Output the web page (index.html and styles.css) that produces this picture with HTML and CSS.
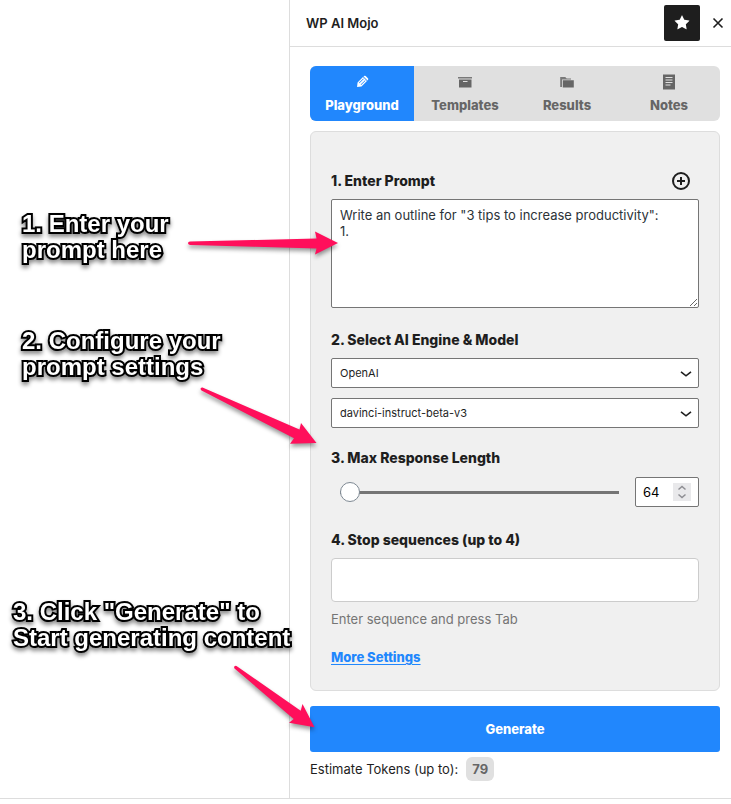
FILE: index.html
```html
<!DOCTYPE html>
<html lang="en">
<head>
<meta charset="utf-8">
<meta name="viewport" content="width=device-width, initial-scale=1">
<title>WP AI Mojo</title>
<link rel="stylesheet" href="styles.css">
</head>
<body>
<div class="editor">
  <main class="canvas"></main>
  <aside class="sidebar">
    <header class="sidebar-header">
      <h1 class="sidebar-title">WP AI Mojo</h1>
      <button class="icon-button pinned" type="button" aria-label="Unpin from toolbar">
        <svg width="24" height="24" viewBox="0 0 24 24" fill="currentColor"><path d="M11.776 4.454a.25.25 0 01.448 0l2.069 4.192a.25.25 0 00.188.137l4.626.672a.25.25 0 01.139.426l-3.348 3.263a.25.25 0 00-.072.222l.79 4.607a.25.25 0 01-.362.263l-4.138-2.175a.25.25 0 00-.232 0l-4.138 2.175a.25.25 0 01-.363-.263l.79-4.607a.25.25 0 00-.071-.222L4.754 9.881a.25.25 0 01.139-.426l4.626-.672a.25.25 0 00.188-.137l2.069-4.192z"/></svg>
      </button>
      <button class="icon-button close" type="button" aria-label="Close">
        <svg width="24" height="24" viewBox="0 0 24 24" fill="none" stroke="currentColor" stroke-width="1.6"><path d="M7.500 7.500l9 9M16.500 7.500l-9 9"/></svg>
      </button>
    </header>

    <div class="sidebar-body">
      <nav class="tabs">
        <button class="tab active" type="button">
          <svg width="20" height="20" viewBox="0 0 20 20"><g transform="rotate(45 10 10)" fill="currentColor"><path d="M7.200 5V4.400A1.200 1.200 0 018.400 3.200h3.200a1.200 1.200 0 011.200 1.200V5z"/><path fill-rule="evenodd" d="M7.200 5.800h5.600v7.700L10 17l-2.800-3.500zM8.400 6.600v6.200h.7V6.600zm2.500 0v6.200h.7V6.600z"/></g></svg>
          Playground
        </button>
        <button class="tab" type="button">
          <svg width="20" height="20" viewBox="0 0 20 20" fill="currentColor"><path d="M3 5h14v1.600H3z" opacity=".85"/><path fill-rule="evenodd" d="M4 7.400h12.500V15.500H4zM8 9v1h4.500V9z"/></svg>
          Templates
        </button>
        <button class="tab" type="button">
          <svg width="20" height="20" viewBox="0 0 20 20" fill="currentColor"><path d="M3.200 15V5h5l1.500 1.500H14v1H5v7.500z" opacity=".85"/><path d="M5.800 8.200h11v7.300h-11z"/></svg>
          Results
        </button>
        <button class="tab" type="button">
          <svg width="20" height="20" viewBox="0 0 20 20"><path fill="currentColor" d="M4 2.500h12v15H4z"/><path d="M6.500 5.500h7M6.500 8h7M6.500 10.500h7M6.500 13h5" stroke="#e0e0e0"/></svg>
          Notes
        </button>
      </nav>

      <form class="panel">
        <section class="field">
          <div class="field-head">
            <label class="field-title" for="prompt">1. Enter Prompt</label>
            <button class="add" type="button" aria-label="Add prompt">
              <svg width="20" height="20" viewBox="0 0 20 20" fill="none" stroke="currentColor" stroke-width="2"><circle cx="10" cy="10" r="8"/><path d="M10 6v8M6 10h8"/></svg>
            </button>
          </div>
          <textarea class="box prompt" id="prompt">Write an outline for "3 tips to increase productivity":
1.</textarea>
        </section>

        <section class="field">
          <label class="field-title" for="engine">2. Select AI Engine &amp; Model</label>
          <div class="select-wrap">
            <select class="box" id="engine"><option>OpenAI</option></select>
            <svg class="chevron" width="12" height="6" viewBox="0 0 12 6"><path d="M1 .8l5 4L11 .8"/></svg>
          </div>
          <div class="select-wrap">
            <select class="box" aria-label="Model"><option>davinci-instruct-beta-v3</option></select>
            <svg class="chevron" width="12" height="6" viewBox="0 0 12 6"><path d="M1 .8l5 4L11 .8"/></svg>
          </div>
        </section>

        <section class="field length">
          <label class="field-title" for="length">3. Max Response Length</label>
          <div class="slider-row">
            <input class="slider" id="length" type="range" min="64" max="2048" value="64">
            <div class="number-wrap">
              <input class="box number" type="number" value="64" aria-label="Max response length">
              <svg class="spinner" width="18" height="18" viewBox="0 0 18 18"><path class="spinner-bg" d="M0 0h18v18H0z"/><path d="M5.500 6.500L9 3.500l3.500 3M5.500 11.500l3.500 3 3.500-3"/></svg>
            </div>
          </div>
        </section>

        <section class="field">
          <label class="field-title" for="stop">4. Stop sequences (up to 4)</label>
          <input class="box stop" id="stop" type="text">
          <p class="hint">Enter sequence and press Tab</p>
        </section>

        <a class="more" href="#more">More Settings</a>
      </form>

      <button class="generate" type="button">Generate</button>
      <p class="estimate">Estimate Tokens (up to): <span class="badge">79</span></p>
    </div>
  </aside>
</div>

<svg class="arrows" width="350" height="740" viewBox="0 0 350 740">
  <path d="M190 241.500L316.500 238.500L315 231.500L338 243L315 254.500L316.500 248.500L190 245Q188 244.500 188 243.200Q188 241.700 190 241.500Z"/>
  <path d="M202.500 387.500L299.500 429.500L301 423L316.500 443L290 443.700L294 438.300L201.500 390.500Q200.300 389.500 200.700 388.300Q201.300 387.300 202.500 387.500Z"/>
  <path d="M236.500 666L300.700 710.700L302.500 704L314.500 727.300L289 722.700L293.700 719L234.500 668.500Q233.700 667.300 234.500 666.300Q235.500 665.500 236.500 666Z"/>
</svg>
<p class="callout callout-prompt">1. Enter your<br>prompt here</p>
<p class="callout callout-settings">2. Configure your<br>prompt settings</p>
<p class="callout callout-generate">3. Click "Generate" to<br>Start generating content</p>
</body>
</html>
```
FILE: styles.css
```css
* {
  box-sizing: border-box;
}

body {
  position: relative;
  margin: 0;
  background: #fff;
  color: #1e1e1e;
  font: 13px/20px Inter, sans-serif;
}

button,
input,
select,
textarea {
  margin: 0;
  font: inherit;
  color: inherit;
}

button {
  border: 0;
  padding: 0;
  background: none;
  cursor: pointer;
}

h1,
p {
  margin: 0;
}

svg {
  display: block;
}

.editor {
  display: flex;
  min-height: calc(100vh - 5px);
  border-bottom: 1px solid #ddd;
}

.canvas {
  flex: 1;
}

.sidebar {
  flex: 0 0 442px;
  border-left: 1px solid #ddd;
}

.sidebar-header {
  display: flex;
  align-items: center;
  height: 47px;
  padding-left: 16px;
  border-bottom: 1px solid #ddd;
}

.sidebar-title {
  flex: 1;
  font-size: 13px;
  font-weight: 600;
}

.icon-button {
  display: grid;
  place-items: center;
  width: 31px;
  height: 36px;
}

.icon-button.close {
  padding-left: 4px;
}

.icon-button.pinned {
  width: 36px;
  border-radius: 2px;
  background: #1e1e1e;
  color: #fff;
}

.sidebar-body {
  padding: 19px 11px 14px 20px;
}

.tabs {
  display: flex;
  overflow: hidden;
  border-radius: 6px;
  background: #e0e0e0;
}

.tab {
  display: flex;
  flex: 1 1 auto;
  flex-direction: column;
  align-items: center;
  gap: 3px;
  width: 102px;
  height: 55px;
  padding-top: 6px;
  color: #666;
  font-weight: 800;
}

.tab.active {
  width: 104px;
  background: #2187fd;
  color: #fff;
}

.panel {
  margin-top: 10px;
  padding: 39px 20px 23px;
  border: 1px solid #ddd;
  border-radius: 6px;
  background: #f0f0f0;
}

.field {
  display: flex;
  flex-direction: column;
  margin-bottom: 22px;
}

.field-head {
  display: flex;
  align-items: center;
  justify-content: space-between;
  padding-right: 8px;
}

.field-title {
  margin-bottom: 8px;
  font-size: 14px;
  font-weight: 800;
}

.add {
  margin-bottom: 8px;
}

.box {
  width: 100%;
  height: 30px;
  padding: 0 8px;
  border: 1px solid #757575;
  border-radius: 2px;
  outline: 0;
  background: #fff;
}

.prompt {
  display: block;
  height: 109px;
  padding: 7px 8px;
  color: #2c3338;
  line-height: 16px;
  resize: vertical;
}

.select-wrap,
.number-wrap {
  position: relative;
}

.select-wrap + .select-wrap {
  margin-top: 10px;
}

select.box {
  display: block;
  appearance: none;
  font-size: 11px;
}

.chevron {
  position: absolute;
  top: 13px;
  right: 7px;
  fill: none;
  stroke: #1e1e1e;
  stroke-width: 1.6;
  pointer-events: none;
}

.field:has(+ .length) {
  margin-bottom: 20px;
}

.slider-row {
  display: flex;
  align-items: center;
  gap: 16px;
  height: 32px;
  padding-left: 9px;
}

.slider {
  flex: 1;
  min-width: 0;
  height: 20px;
  background: none;
  appearance: none;
}

.slider::-webkit-slider-runnable-track {
  height: 3px;
  background: #757575;
}

.slider::-webkit-slider-thumb {
  width: 20px;
  height: 20px;
  margin-top: -9px;
  border: 1px solid #7e8993;
  border-radius: 50%;
  background: #fff;
  appearance: none;
}

.number-wrap {
  width: 64px;
}

.number {
  padding: 0 7px;
  color: #000;
  appearance: textfield;
}

.number::-webkit-inner-spin-button {
  display: none;
}

.spinner {
  position: absolute;
  top: 6px;
  right: 8px;
  fill: none;
  stroke: #8e8e93;
  stroke-width: 1.5;
  pointer-events: none;
}

.spinner-bg {
  fill: #e9e9eb;
  stroke: none;
}

.stop {
  height: 44px;
  border-color: #ccc;
  border-radius: 4px;
}

.hint {
  margin-top: 7px;
  color: #757575;
}

.field:has(.hint) {
  margin-bottom: 18px;
}

.more {
  display: block;
  width: fit-content;
  color: #2187fd;
  font-weight: 800;
  text-underline-offset: 2px;
}

.generate {
  display: block;
  width: 100%;
  height: 46px;
  margin-top: 15px;
  border-radius: 3px;
  background: #2187fd;
  color: #fff;
  font-weight: 800;
}

.estimate {
  display: flex;
  align-items: center;
  gap: 8px;
  margin-top: 5px;
}

.badge {
  padding: 2px 6px;
  border-radius: 6px;
  background: #e0e0e0;
  color: #666;
  font-weight: 700;
}

.arrows {
  position: absolute;
  top: 0;
  left: 0;
  fill: #ff0f5b;
  filter: drop-shadow(0 3px 2px rgb(0 0 0 / 40%));
  pointer-events: none;
}

.callout {
  position: absolute;
  color: #fff;
  font: 700 24px/26px "Liberation Sans", sans-serif;
  white-space: nowrap;
  paint-order: stroke fill;
  -webkit-text-stroke: 4px #000;
  filter: drop-shadow(0 3px 2px rgb(0 0 0 / 45%));
  pointer-events: none;
}

.callout-prompt {
  top: 211px;
  left: 22px;
}

.callout-settings {
  top: 328px;
  left: 22px;
}

.callout-generate {
  top: 599px;
  left: 13px;
}
```
